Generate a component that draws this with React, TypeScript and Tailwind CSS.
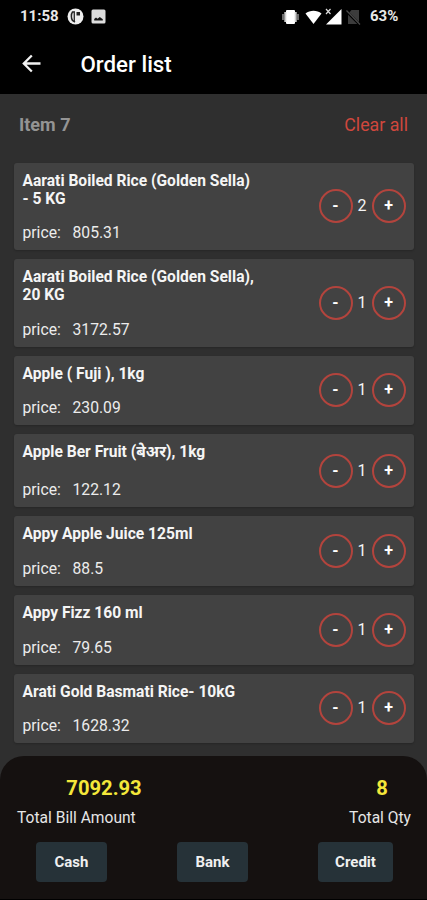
import { useState } from "react";

type Item = {
  id: number;
  lines: string[];
  price: string;
  qty: number;
  height: string;
};

const initialItems: Item[] = [
  {
    id: 1,
    lines: ["Aarati Boiled Rice (Golden Sella)", "- 5 KG"],
    price: "805.31",
    qty: 2,
    height: "h-[87.5px]",
  },
  {
    id: 2,
    lines: ["Aarati Boiled Rice (Golden Sella),", "20 KG"],
    price: "3172.57",
    qty: 1,
    height: "h-[87.5px]",
  },
  {
    id: 3,
    lines: ["Apple ( Fuji ), 1kg"],
    price: "230.09",
    qty: 1,
    height: "h-[69.5px]",
  },
  {
    id: 4,
    lines: ["Apple Ber Fruit (बेअर), 1kg"],
    price: "122.12",
    qty: 1,
    height: "h-[73px]",
  },
  {
    id: 5,
    lines: ["Appy Apple Juice 125ml"],
    price: "88.5",
    qty: 1,
    height: "h-[70px]",
  },
  {
    id: 6,
    lines: ["Appy Fizz 160 ml"],
    price: "79.65",
    qty: 1,
    height: "h-[69.5px]",
  },
  {
    id: 7,
    lines: ["Arati Gold Basmati Rice- 10kG"],
    price: "1628.32",
    qty: 1,
    height: "h-[69.5px]",
  },
];

const StatusBar = () => (
  <div className="flex h-[33px] items-center pl-5 pr-7 text-[15px] font-bold leading-none text-[#e8e8e8]">
    <span className="w-[39px] whitespace-nowrap">11:58</span>
    <svg className="ml-2 h-[17px] w-[17px]" viewBox="0 0 17 17">
      <circle cx="8.5" cy="8.5" r="8" fill="#eee" />
      <path
        d="M8 4H5.500C4 6 4 10.500 5.500 12.500L8 14"
        fill="none"
        stroke="#222"
        strokeWidth="1.500"
      />
      <path d="M7.300 4v9.500" stroke="#333" strokeWidth="1.400" />
      <path d="M9.500 4H13v3.500H9.500z" fill="#222" />
    </svg>
    <svg className="ml-[7px] h-[15px] w-[15px]" viewBox="0 0 15 15">
      <rect x="0.500" y="0.500" width="14" height="14" rx="1.500" fill="#ddd" />
      <path
        d="M3.200 11.500v-1.500l1.800-1.500 1.500 1.200 2.300-1.700 3 2.200v1.300z"
        fill="#161616"
      />
    </svg>
    <div className="ml-auto flex items-center">
      <svg className="h-4 w-[17px]" viewBox="0 0 17 16">
        <rect x="4" y="1" width="9" height="14" rx="1" fill="#fff" />
        <path d="M3.300 3v10M13.700 3v10" stroke="#ccc" strokeWidth="2" />
        <path d="M1 5v6M16 5v6" stroke="#999" strokeWidth="1.400" />
      </svg>
      <svg className="ml-[6px] h-[14px] w-[17px]" viewBox="0 0 17 14">
        <path d="M.5 3.500C5 -.3 12 -.3 16.500 3.500L8.500 14z" fill="#fff" />
      </svg>
      <svg className="ml-[3px] h-[17px] w-[17px]" viewBox="0 0 17 17">
        <path d="M16.500 1v15.500H1z" fill="#fff" />
        <path d="M1 1l4.500 5M5.500 1L1 6" stroke="#ddd" strokeWidth="1.200" />
      </svg>
      <svg className="ml-1 h-4 w-[15px]" viewBox="0 0 15 16">
        <path d="M5.500 1H13v14H2V5z" fill="#3c3c3c" />
        <path d="M0 2l14 14" stroke="#000" strokeWidth="2.500" />
        <path d="M.5 1.500L14 15.500" stroke="#4a4a4a" strokeWidth="1.200" />
      </svg>
      <span className="ml-[9.5px] w-[29px] whitespace-nowrap">63%</span>
    </div>
  </div>
);

const RoundButton = ({
  label,
  onClick,
}: {
  label: string;
  onClick: () => void;
}) => (
  <button
    onClick={onClick}
    className="flex h-[34px] w-[34px] items-center justify-center rounded-full border-2 border-[#b3443d] text-base font-bold leading-none text-white"
  >
    {label}
  </button>
);

const ItemCard = ({
  item,
  onChange,
}: {
  item: Item;
  onChange: (step: number) => void;
}) => (
  <div
    className={`${item.height} flex shrink-0 items-center justify-between rounded-[3px] bg-[#424242] pl-[8.5px] pr-[8.5px] shadow-[0_1px_2px_rgba(0,0,0,0.2)]`}
  >
    <div className="flex h-full flex-col justify-between pb-[8px] pt-[9px]">
      <h2 className="text-[15.6px] font-bold leading-[18px] text-[#f5f5f5]">
        {item.lines.map((line) => (
          <span key={line} className="block whitespace-nowrap">
            {line}
          </span>
        ))}
      </h2>
      <p className="flex text-[15.7px] leading-[18px] text-[#ececec]">
        <span className="w-[50px]">price:</span>
        <span>{item.price}</span>
      </p>
    </div>
    <div className="flex items-center">
      <RoundButton label="-" onClick={() => onChange(-1)} />
      <span className="w-[19px] text-center text-base text-[#f5f5f5]">
        {item.qty}
      </span>
      <RoundButton label="+" onClick={() => onChange(1)} />
    </div>
  </div>
);

export default function App() {
  const [items, setItems] = useState(initialItems);
  const [totalBill, setTotalBill] = useState(7092.93);

  const changeQty = (item: Item, step: number) => {
    if (item.qty + step < 1) return;
    setItems((prev) =>
      prev.map((it) => (it.id === item.id ? { ...it, qty: it.qty + step } : it)),
    );
    setTotalBill((prev) => prev + step * Number(item.price));
  };

  const clearAll = () => {
    setItems([]);
    setTotalBill(0);
  };

  const totalQty = items.reduce((sum, item) => sum + item.qty, 0);

  return (
    <div className="flex h-[900px] w-[427px] flex-col overflow-hidden bg-[#2f2f2f] font-[Roboto,'Noto_Sans',sans-serif]">
      <header className="h-[94px] shrink-0 bg-black">
        <StatusBar />
        <div className="flex h-[61px] items-center pl-[22px]">
          <svg className="h-[19px] w-[19px]" viewBox="0 0 19 19">
            <path
              d="M18.500 9.500H2M9.800 1.500l-8 8 8 8"
              fill="none"
              stroke="#f2f2f2"
              strokeWidth="2.300"
            />
          </svg>
          <h1 className="ml-[39.5px] pt-px text-[22.3px] font-medium leading-none text-white">
            Order list
          </h1>
        </div>
      </header>

      <div className="flex h-[61px] shrink-0 items-center justify-between px-[19px]">
        <span className="text-[18px] font-bold text-[#949494]">
          Item {items.length}
        </span>
        <button className="pt-px text-[17.8px] text-[#d0473d]" onClick={clearAll}>
          Clear all
        </button>
      </div>

      <main className="flex min-h-0 flex-1 flex-col gap-[9px] overflow-hidden pl-[14px] pr-[13px] pt-[7.5px]">
        {items.map((item) => (
          <ItemCard
            key={item.id}
            item={item}
            onChange={(step) => changeQty(item, step)}
          />
        ))}
      </main>

      <footer className="flex h-[144px] shrink-0 flex-col rounded-t-[24px] border-b border-black bg-[#151110] pt-5">
        <div className="flex justify-between pl-[17px] pr-4">
          <div className="text-right">
            <p className="-mr-[6px] text-[20.2px] font-bold leading-6 text-[#f4e73a]">
              {totalBill.toFixed(2)}
            </p>
            <p className="mt-2 text-[15.6px] leading-5 text-[#e6e6e6]">
              Total Bill Amount
            </p>
          </div>
          <div className="text-center">
            <p className="pl-1 text-[20.2px] font-bold leading-6 text-[#f4e73a]">
              {totalQty}
            </p>
            <p className="mt-2 text-[15.6px] leading-5 text-[#e6e6e6]">
              Total Qty
            </p>
          </div>
        </div>
        <div className="mt-[13.5px] flex justify-between pl-9 pr-[34px] text-[15px] font-bold text-[#f0f0f0]">
          <button className="h-10 w-[71px] rounded bg-[#263238] pt-px">Cash</button>
          <button className="h-10 w-[71px] rounded bg-[#263238] pt-px">Bank</button>
          <button className="h-10 w-[75px] rounded bg-[#263238] pt-px">Credit</button>
        </div>
      </footer>
    </div>
  );
}
